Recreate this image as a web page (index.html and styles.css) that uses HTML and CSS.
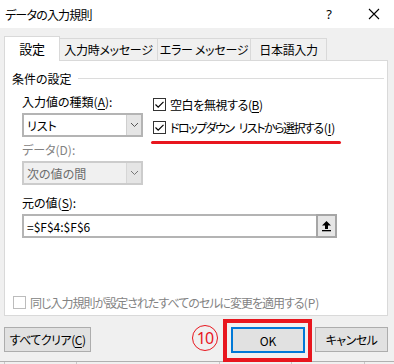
FILE: index.html
```html
<!DOCTYPE html>
<html lang="ja">
<head>
    <meta charset="UTF-8">
    <title>データの入力規則</title>
    <link rel="stylesheet" href="styles.css">
</head>
<body>

    <div class="dialog">
        <!-- title bar -->
        <div class="titlebar">
            <span class="title">データの入力規則</span>
            <span class="help">?</span>
            <svg class="close" width="12" height="12" viewBox="0 0 12 12">
                <path d="M1 1 L11 11 M11 1 L1 11" stroke="#000" stroke-width="1.1" fill="none"/>
            </svg>
        </div>

        <!-- tabs -->
        <div class="tabs">
            <div class="tab active">設定</div>
            <div class="tab">入力時メッセージ</div>
            <div class="tab">エラー メッセージ</div>
            <div class="tab">日本語入力</div>
        </div>

        <div class="panel">
            <div class="group-title"><span>条件の設定</span></div>

            <div class="criteria">
                <div class="left">
                    <div class="label">入力値の種類(<u>A</u>):</div>
                    <div class="combo">
                        <span class="value">リスト</span>
                        <span class="arrow">
                            <svg width="9" height="6" viewBox="0 0 9 6"><path d="M1 1 L4.5 4.5 L8 1" stroke="#555" stroke-width="1" fill="none"/></svg>
                        </span>
                    </div>
                    <div class="label disabled">データ(D):</div>
                    <div class="combo disabled">
                        <span class="value">次の値の間</span>
                        <span class="arrow">
                            <svg width="9" height="6" viewBox="0 0 9 6"><path d="M1 1 L4.5 4.5 L8 1" stroke="#777" stroke-width="1" fill="none"/></svg>
                        </span>
                    </div>
                </div>

                <div class="right">
                    <div class="check blank">
                        <span class="box"><svg width="11" height="11" viewBox="0 0 11 11"><path d="M1.5 5.5 L4.2 8.2 L9.5 2.8" stroke="#000" stroke-width="1.2" fill="none"/></svg></span>
                        空白を無視する(<u>B</u>)
                    </div>
                    <div class="check">
                        <span class="box"><svg width="11" height="11" viewBox="0 0 11 11"><path d="M1.5 5.5 L4.2 8.2 L9.5 2.8" stroke="#000" stroke-width="1.2" fill="none"/></svg></span>
                        <span class="tighter">ドロップダウン</span><span class="tighter word">リストから選択する</span><span class="key">(<u>I</u>)</span>
                    </div>
                    <div class="marker"></div>
                </div>
            </div>

            <div class="label source-label">元の値(<u>S</u>):</div>
            <div class="source">
                <span class="value">=$F$4:$F$6</span>
                <span class="pick">
                    <svg width="11" height="12" viewBox="0 0 11 12">
                        <path d="M5.5 1 L10 5.5 L7 5.5 L7 9 L4 9 L4 5.5 L1 5.5 Z" fill="#000"/>
                        <rect x="1" y="10" width="9" height="1.3" fill="#000"/>
                    </svg>
                </span>
            </div>

            <div class="check disabled apply">
                <span class="box"></span>
                <span class="tight">同じ入力規則が設定されたすべてのセルに変更を適用する</span>(P)
            </div>
        </div>

        <div class="buttons">
            <button class="btn clear">すべてクリア(<u>C</u>)</button>
            <span class="step">10</span>
            <div class="highlight">
                <button class="btn ok">OK</button>
            </div>
            <button class="btn cancel">キャンセル</button>
        </div>

        <!-- worksheet grid peeking out below -->
        <div class="sheet">
            <span style="width: 5px"></span>
            <span style="width: 72px"></span>
            <span style="width: 143px"></span>
            <span style="width: 72px"></span>
            <span style="width: 73px"></span>
        </div>
    </div>

</body>
</html>
```

FILE: styles.css
```css
html, body {
    margin: 0;
    padding: 0;
}

* {
    box-sizing: border-box;
}

body {
    font-family: "Noto Sans CJK JP", "Noto Sans", sans-serif;
    font-size: 12px;
    font-feature-settings: "palt";
    color: #000;
    background: #f0f0f0;
}

.dialog {
    width: 394px;
    height: 364px;
    overflow: hidden;
    background: #f0f0f0;
    display: flex;
    flex-direction: column;
}

u {
    text-decoration-thickness: 1px;
    text-underline-offset: 2px;
}

/* Title bar */
.titlebar {
    height: 28px;
    background: #fff;
    display: flex;
    align-items: center;
    padding-left: 5px;
}

.title {
    flex: 1;
    font-size: 12px;
    letter-spacing: -0.8px;
}

.help {
    font-family: "Noto Sans", sans-serif;
    font-size: 13px;
    margin-right: 36px;
}

.close {
    margin-right: 14px;
}

/* Tabs */
.tabs {
    display: flex;
    align-items: flex-end;
    height: 24px;
    margin: 8px 0 0 4px;
}

.tab {
    height: 22px;
    border: 1px solid #d9d9d9;
    border-bottom: none;
    margin-right: -1px;
    background: #f0f0f0;
    display: flex;
    align-items: center;
    justify-content: center;
    letter-spacing: -0.3px;
}

.tab:nth-child(2) { width: 99px; }
.tab:nth-child(3) { width: 94px; }
.tab:nth-child(4) { width: 77px; }

.tab.active {
    width: 56px;
    height: 25px;
    margin-bottom: -1px;
    background: #fff;
    position: relative;
    z-index: 1;
    padding-bottom: 2px;
    font-size: 13px;
}

/* Panel */
.panel {
    height: 256px;
    margin: 0 6px 0 4px;
    background: #fff;
    border: 1px solid #d9d9d9;
    padding-top: 9px;
}

.group-title {
    display: flex;
    align-items: center;
    height: 16px;
    padding: 0 3px 0 7px;
}

.group-title::after {
    content: "";
    flex: 1;
    border-top: 1px solid #dcdcdc;
    margin-left: 6px;
}

.criteria {
    display: flex;
    margin: 8px 0 0 17px;
}

.left {
    width: 121px;
}

.label {
    height: 16px;
    line-height: 16px;
}

.label.disabled {
    color: #838383;
}

.combo {
    height: 24px;
    margin: 3px 0 5px;
    border: 2px solid #b4b4b4;
    display: flex;
    align-items: center;
    background: #fff;
}

.combo .value {
    flex: 1;
    padding-left: 3px;
}

.combo .arrow {
    width: 15px;
    height: 100%;
    border-left: 1px solid #cfcfcf;
    background: #e5e5e5;
    display: flex;
    align-items: center;
    justify-content: center;
}

.combo.disabled {
    background: #f0f0f0;
    border-color: #cccccc;
    color: #6d6d6d;
}

.combo.disabled .arrow {
    border-left-color: #d6d6d6;
}

.right {
    margin-left: 10px;
    padding-top: 2px;
}

.check {
    display: flex;
    align-items: center;
    height: 16px;
    margin-bottom: 7px;
    white-space: nowrap;
}

.check.blank {
    letter-spacing: -0.4px;
}

.tight {
    letter-spacing: -1px;
}

.tighter {
    letter-spacing: -1.5px;
}

.word {
    margin-left: 5px;
}

.key {
    margin-left: 1px;
}

.check .box {
    width: 13px;
    height: 13px;
    border: 1px solid #333;
    background: #fff;
    margin-right: 4px;
    display: flex;
    align-items: center;
    justify-content: center;
}

.marker {
    width: 190px;
    height: 3px;
    margin: -1px 0 0 -2px;
    border-radius: 2px;
    background: #e8161e;
}

.source-label {
    margin: 5px 0 0 17px;
}

.source {
    width: 315px;
    height: 24px;
    margin: 3px 0 0 17px;
    border: 2px solid #b4b4b4;
    display: flex;
    align-items: center;
}

.source .value {
    flex: 1;
    padding-left: 3px;
}

.source .pick {
    width: 21px;
    height: 24px;
    margin: 0 -2px 0 0;
    border: 2px solid #a6a6a6;
    background: #e6e6e6;
    display: flex;
    align-items: center;
    justify-content: center;
}

.check.apply {
    margin: 56px 0 0 8px;
    color: #838383;
}

.check.disabled .box {
    border-color: #bcbcbc;
}

/* Buttons */
.buttons {
    height: 45px;
    display: flex;
    align-items: flex-start;
    padding: 0 6px 0 4px;
}

.btn {
    font-family: inherit;
    font-size: 12px;
    font-feature-settings: "palt";
    height: 25px;
    margin-top: 11px;
    padding: 0;
    background: #e1e1e1;
    border: 1px solid #adadad;
    color: #000;
}

.clear {
    width: 87px;
    letter-spacing: -0.5px;
}

.step {
    width: 26px;
    height: 26px;
    margin: 9px 5px 0 auto;
    border: 1.5px solid #e8161e;
    border-radius: 50%;
    color: #e8161e;
    font-family: "Noto Sans", sans-serif;
    font-size: 16px;
    letter-spacing: -1px;
    display: flex;
    align-items: center;
    justify-content: center;
}

.highlight {
    width: 89px;
    height: 43px;
    margin-top: 3px;
    border: 4px solid #e8161e;
    padding: 4px 3px 0 4px;
    position: relative;
    z-index: 1;
}

.highlight .ok {
    width: 74px;
    height: 26px;
    margin: 0;
    border: 2px solid #0078d7;
}

.cancel {
    width: 73px;
    margin-left: 3px;
    letter-spacing: -0.5px;
}

.sheet {
    flex: 1;
    display: flex;
    border-top: 1px solid #b0b0b0;
}

.sheet span {
    border-right: 1px solid #c8c8c8;
}
```
